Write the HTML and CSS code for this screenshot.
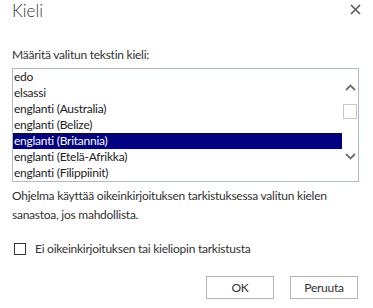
FILE: index.html
```html
<!DOCTYPE html>
<html lang="fi">
<head>
    <meta charset="UTF-8">
    <title>Kieli</title>
    <link rel="stylesheet" href="styles.css">
</head>
<body>
    <div class="dialog">
        <!-- Otsikko -->
        <div class="dialog-header">
            <h1>Kieli</h1>
            <svg class="close" width="11" height="11" viewBox="0 0 11 11">
                <path d="M1 1 L10 10 M10 1 L1 10" stroke="#5a5a5a" stroke-width="1.6" fill="none"/>
            </svg>
        </div>

        <div class="field-label">Määritä valitun tekstin kieli:</div>

        <!-- Kieliluettelo -->
        <div class="listbox">
            <ul class="options">
                <li>edo</li>
                <li>elsassi</li>
                <li>englanti (Australia)</li>
                <li>englanti (Belize)</li>
                <li class="selected">englanti (Britannia)</li>
                <li>englanti (Etelä-Afrikka)</li>
                <li>englanti (Filippiinit)</li>
            </ul>
            <div class="scrollbar">
                <svg class="arrow up" width="11" height="7" viewBox="0 0 11 7">
                    <path d="M1 6 L5.5 1.5 L10 6" stroke="#707070" stroke-width="1.8" fill="none"/>
                </svg>
                <div class="thumb"></div>
                <svg class="arrow down" width="11" height="7" viewBox="0 0 11 7">
                    <path d="M1 1 L5.5 5.5 L10 1" stroke="#707070" stroke-width="1.8" fill="none"/>
                </svg>
            </div>
        </div>

        <p class="hint">Ohjelma käyttää oikeinkirjoituksen tarkistuksessa valitun kielen sanastoa, jos mahdollista.</p>

        <label class="check-row">
            <span class="checkbox"></span>
            Ei oikeinkirjoituksen tai kieliopin tarkistusta
        </label>

        <div class="buttons">
            <button>OK</button>
            <button>Peruuta</button>
        </div>
    </div>
</body>
</html>
```

FILE: styles.css
```css
body {
    margin: 0;
    padding: 0;
    background-color: #fff;
    font-family: Lato, "Open Sans", sans-serif;
    font-size: 12px;
    letter-spacing: -0.25px;
    color: #222;
}
.dialog {
    width: 373px;
    height: 308px;
    padding: 0 14px 0 12px;
    box-sizing: border-box;
}
.dialog-header {
    display: flex;
    justify-content: space-between;
    align-items: center;
    height: 21px;
}
.dialog-header h1 {
    margin: 0;
    font-size: 17px;
    font-weight: 300;
    letter-spacing: 0;
    color: #333;
}
.close {
    margin-top: -2px;
    margin-right: -2px;
}
.field-label {
    margin-top: 25px;
    height: 18px;
    line-height: 18px;
    color: #333;
}
.listbox {
    margin-top: 4px;
    display: flex;
    width: 347px;
    height: 114px;
    box-sizing: border-box;
    border: 1px solid #abbbd0;
    overflow: hidden;
}
.options {
    list-style: none;
    margin: 0;
    padding: 0;
    flex: 1;
}
.options li {
    height: 16px;
    line-height: 16px;
    padding-left: 1px;
    color: #222;
    white-space: nowrap;
}
.options li.selected {
    background-color: #000080;
    color: #fff;
}
.scrollbar {
    width: 16px;
    display: flex;
    flex-direction: column;
    align-items: center;
}
.arrow.up {
    margin-top: 15px;
}
.thumb {
    margin-top: 13px;
    width: 14px;
    height: 15px;
    box-sizing: border-box;
    border: 1px solid #c8c8c8;
    background: #fff;
}
.arrow.down {
    margin-top: 34px;
}
.hint {
    margin: 4px 0 0;
    line-height: 19px;
    color: #333;
}
.check-row {
    display: flex;
    align-items: center;
    gap: 9px;
    margin-top: 17px;
    padding-left: 2px;
    color: #333;
}
.checkbox {
    width: 12px;
    height: 12px;
    box-sizing: border-box;
    border: 1px solid #333;
    background: #fff;
}
.buttons {
    display: flex;
    justify-content: flex-end;
    gap: 16px;
    margin-top: 20px;
    padding-right: 1px;
}
.buttons button {
    width: 68px;
    height: 23px;
    border: 1px solid #b4b4b4;
    background: #fff;
    font-family: inherit;
    font-size: 12px;
    letter-spacing: -0.25px;
    color: #333;
    padding: 0;
}
```
